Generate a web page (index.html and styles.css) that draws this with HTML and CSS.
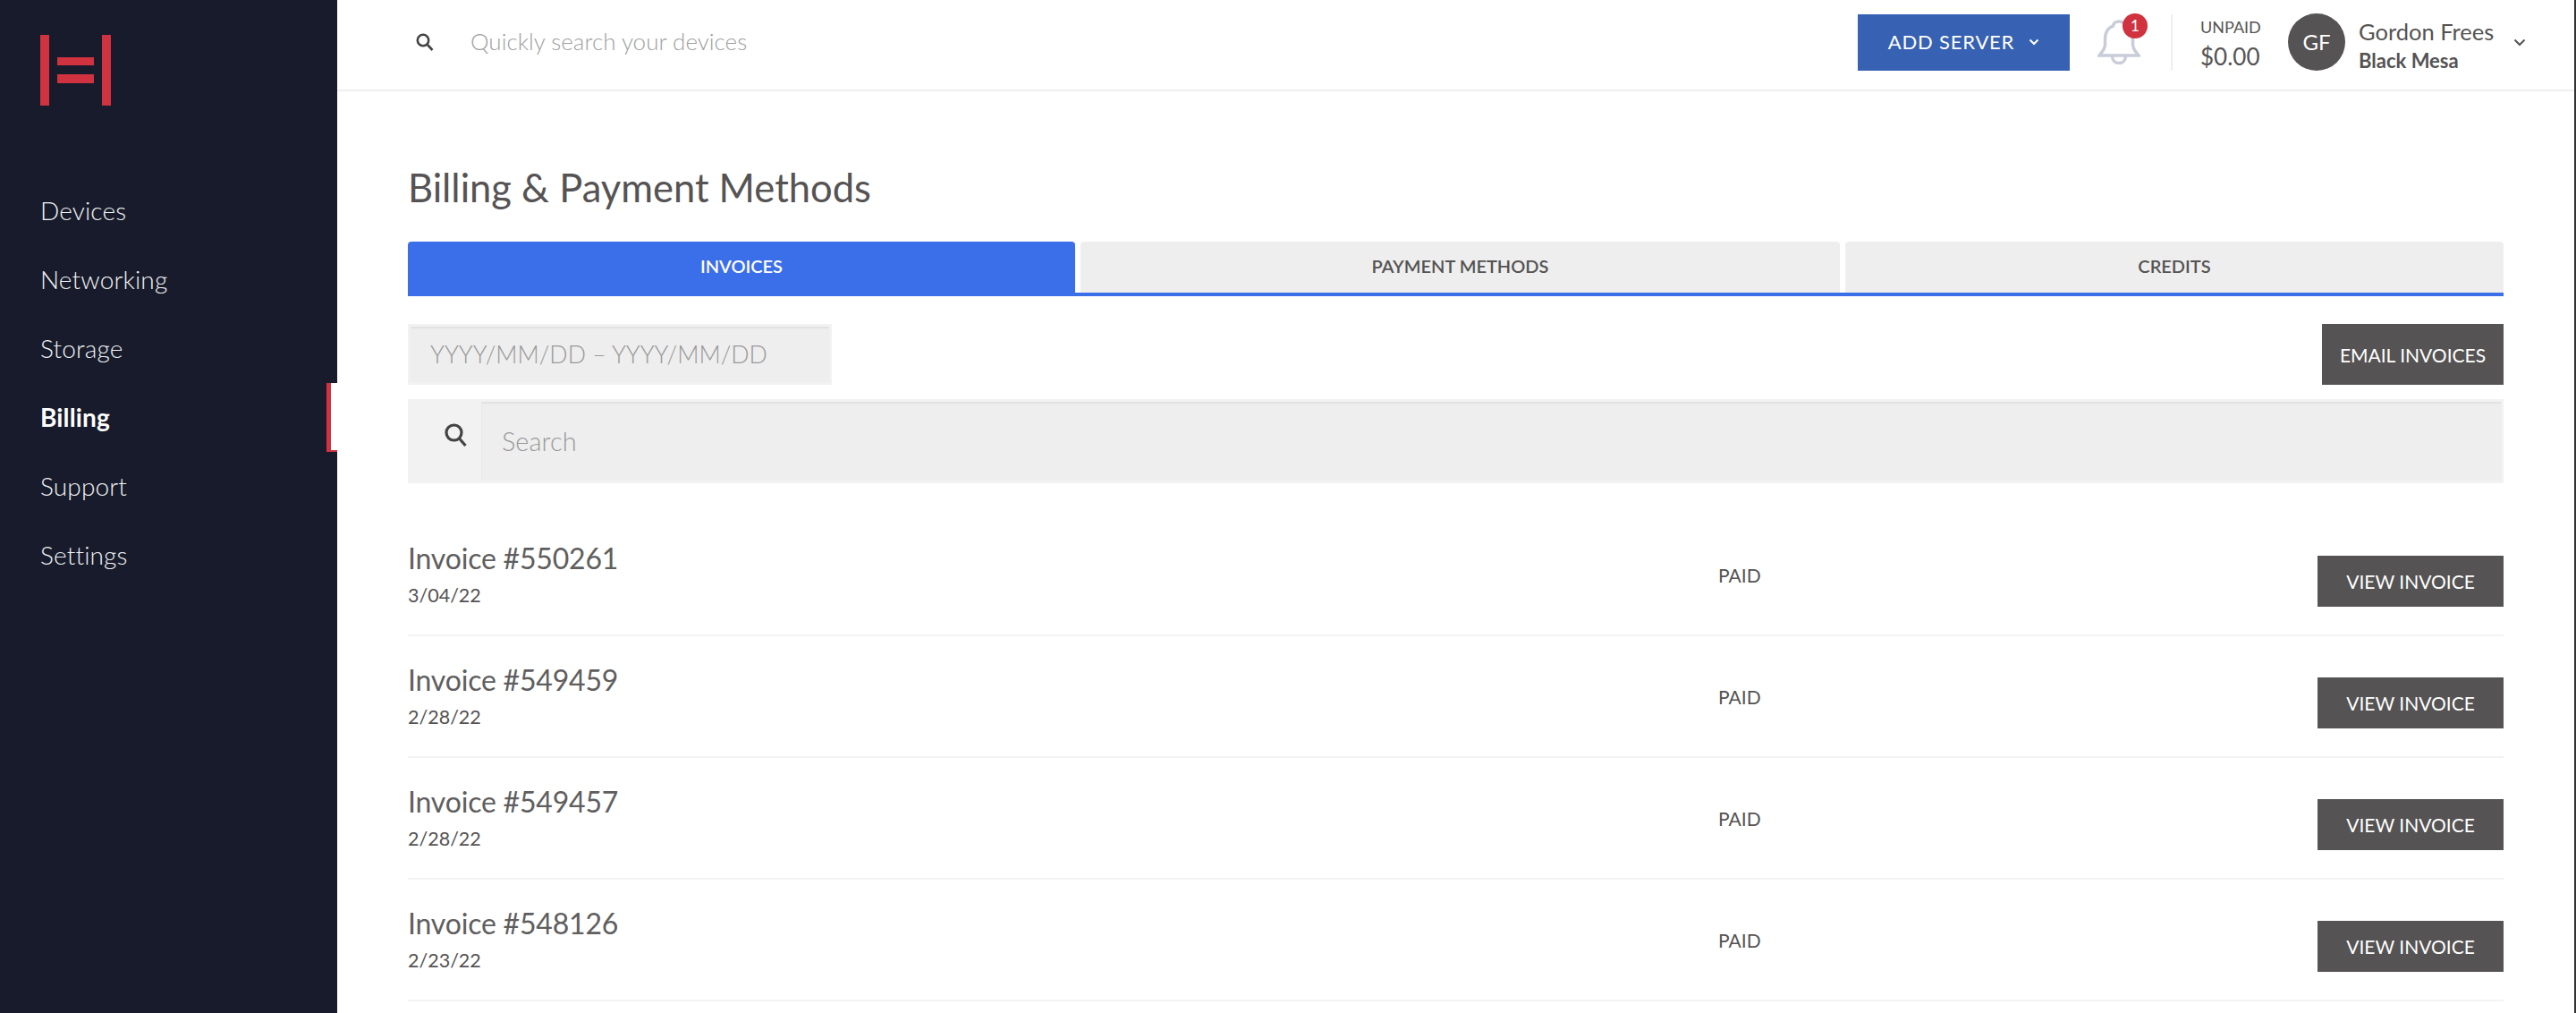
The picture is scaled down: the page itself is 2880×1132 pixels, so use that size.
FILE: index.html
```html
<!DOCTYPE html>
<html lang="en">
<head>
  <meta charset="UTF-8">
  <meta name="viewport" content="width=device-width, initial-scale=1.0">
  <title>Billing &amp; Payment Methods</title>
  <link rel="stylesheet" href="styles.css">
</head>
<body>
  <div class="app">
    <aside class="sidebar">
      <svg class="logo" width="79" height="79" viewBox="0 0 79 79">
        <rect x="0" y="0" width="10" height="79"/>
        <rect x="69" y="0" width="10" height="79"/>
        <rect x="19" y="25" width="41" height="9"/>
        <rect x="19" y="44" width="41" height="10"/>
      </svg>
      <nav class="nav">
        <a class="nav-item">Devices</a>
        <a class="nav-item">Networking</a>
        <a class="nav-item">Storage</a>
        <a class="nav-item active">Billing</a>
        <a class="nav-item">Support</a>
        <a class="nav-item">Settings</a>
      </nav>
    </aside>

    <div class="main">
      <header class="topbar">
        <svg class="top-search-icon" width="20" height="20" viewBox="0 0 20 20">
          <circle cx="8" cy="8" r="6.2"/>
          <path d="M12.5 12.5 L18.5 19"/>
        </svg>
        <span class="top-search-text">Quickly search your devices</span>
        <button class="add-server">ADD SERVER
          <svg width="12" height="8" viewBox="0 0 12 8"><path d="M1.5 1.5 L6 6 L10.5 1.5"/></svg>
        </button>
        <div class="bell">
          <svg width="48" height="50" viewBox="0 0 48 50">
            <path d="M24 2 C20 2 18 3.5 17.5 7 C11 9 8.5 14 8.5 22 L8.5 28 C8.5 33 5 36 2 40 L46 40 C43 36 39.5 33 39.5 28 L39.5 22 C39.5 14 37 9 30.5 7 C30 3.5 28 2 24 2 Z"/>
            <path d="M16.5 41 C17 51 31 51 31.5 41"/>
          </svg>
          <span class="badge">1</span>
        </div>
        <div class="unpaid">
          <span class="unpaid-label">UNPAID</span>
          <span class="unpaid-amount">$0.00</span>
        </div>
        <div class="avatar">GF</div>
        <div class="user">
          <span class="user-name">Gordon Frees</span>
          <span class="user-org">Black Mesa</span>
        </div>
        <svg class="user-chevron" width="14" height="9" viewBox="0 0 14 9"><path d="M1.5 1.5 L7 7 L12.5 1.5"/></svg>
      </header>

      <section class="content">
        <h1 class="page-title">Billing &amp; Payment Methods</h1>

        <div class="tabs">
          <div class="tab tab-active">INVOICES</div>
          <div class="tab tab-payment">PAYMENT METHODS</div>
          <div class="tab tab-credits">CREDITS</div>
        </div>

        <div class="filter-row">
          <div class="date-box">YYYY/MM/DD – YYYY/MM/DD</div>
          <button class="dark-btn email-btn">EMAIL INVOICES</button>
        </div>

        <div class="search-bar">
          <div class="search-addon">
            <svg width="26" height="26" viewBox="0 0 26 26">
              <circle cx="10.5" cy="10.5" r="8.5"/>
              <path d="M16.5 17 L23.5 25"/>
            </svg>
          </div>
          <div class="search-input">Search</div>
        </div>

        <div class="invoices">
          <div class="invoice">
            <div class="invoice-info">
              <div class="invoice-title">Invoice #550261</div>
              <div class="invoice-date">3/04/22</div>
            </div>
            <div class="invoice-status">PAID</div>
            <button class="dark-btn view-btn">VIEW INVOICE</button>
          </div>
          <div class="invoice">
            <div class="invoice-info">
              <div class="invoice-title">Invoice #549459</div>
              <div class="invoice-date">2/28/22</div>
            </div>
            <div class="invoice-status">PAID</div>
            <button class="dark-btn view-btn">VIEW INVOICE</button>
          </div>
          <div class="invoice">
            <div class="invoice-info">
              <div class="invoice-title">Invoice #549457</div>
              <div class="invoice-date">2/28/22</div>
            </div>
            <div class="invoice-status">PAID</div>
            <button class="dark-btn view-btn">VIEW INVOICE</button>
          </div>
          <div class="invoice">
            <div class="invoice-info">
              <div class="invoice-title">Invoice #548126</div>
              <div class="invoice-date">2/23/22</div>
            </div>
            <div class="invoice-status">PAID</div>
            <button class="dark-btn view-btn">VIEW INVOICE</button>
          </div>
        </div>
      </section>
    </div>
  </div>
</body>
</html>
```

FILE: styles.css
```css
html, body {
  margin: 0;
  height: 100%;
  overflow: hidden;
  background-color: #fff;
  font-family: Lato, "Open Sans", sans-serif;
  color: #555353;
}

button {
  font-family: inherit;
  border: none;
}

.app {
  display: flex;
  height: 1132px;
}

/* sidebar */
.sidebar {
  width: 377px;
  flex-shrink: 0;
  background-color: #171b2b;
}

.logo {
  display: block;
  margin: 39px 0 0 45px;
  fill: #d0323f;
}

.nav {
  display: flex;
  flex-direction: column;
  margin-top: 78px;
}

.nav-item {
  display: flex;
  align-items: center;
  height: 77px;
  padding-left: 45px;
  font-size: 28px;
  font-weight: 300;
  letter-spacing: 0.15px;
  color: #f2f3f5;
}

.nav-item.active {
  position: relative;
  font-weight: 700;
  color: #fff;
}

.nav-item.active::after {
  content: "";
  position: absolute;
  right: 0;
  top: 1px;
  width: 7px;
  height: 75px;
  background-color: #fff;
  border-left: 5px solid #d0323f;
  border-bottom: 2px solid #d0323f;
}

/* top bar */
.main {
  flex: 1;
  min-width: 0;
  border-right: 2px solid #333;
}

.topbar {
  display: flex;
  align-items: center;
  height: 102px;
  box-sizing: border-box;
  border-bottom: 2px solid #efefef;
  padding: 0 0 6px 88px;
}

.top-search-icon {
  fill: none;
  stroke: #444;
  stroke-width: 2.6;
}

.top-search-text {
  margin: -2px 0 0 41px;
  font-size: 26px;
  font-weight: 300;
  color: #a0a0a0;
}

.add-server {
  display: flex;
  align-items: center;
  justify-content: center;
  gap: 16px;
  width: 237px;
  height: 63px;
  padding-bottom: 2px;
  margin-left: auto;
  background-color: #3761b3;
  color: #fff;
  font-size: 22px;
  letter-spacing: 0.8px;
}

.add-server svg {
  fill: none;
  stroke: #fff;
  stroke-width: 2;
}

.bell {
  position: relative;
  width: 48px;
  height: 50px;
  margin: 0 34px 0 31px;
}

.bell svg {
  display: block;
  fill: none;
  stroke: #c9cdd9;
  stroke-width: 3.5;
}

.badge {
  position: absolute;
  top: -7px;
  right: -8px;
  width: 28px;
  height: 28px;
  border-radius: 50%;
  background-color: #d0323f;
  color: #fff;
  font-size: 17px;
  line-height: 28px;
  text-align: center;
}

.unpaid {
  display: flex;
  flex-direction: column;
  gap: 6px;
  width: 99px;
  height: 63px;
  box-sizing: border-box;
  padding-left: 31px;
  border-left: 2px solid #efefef;
}

.unpaid-label {
  font-size: 18px;
  line-height: 28px;
}

.unpaid-amount {
  font-size: 26px;
  line-height: 26px;
}

.avatar {
  width: 64px;
  height: 64px;
  margin-left: 32px;
  border-radius: 50%;
  background-color: #555353;
  color: #fff;
  font-size: 24px;
  line-height: 64px;
  text-align: center;
}

.user {
  display: flex;
  flex-direction: column;
  gap: 6px;
  width: 151px;
  margin: 7px 0 0 15px;
  white-space: nowrap;
}

.user-name {
  font-size: 25.5px;
  line-height: 28px;
}

.user-org {
  font-size: 22px;
  line-height: 26px;
  font-weight: 700;
}

.user-chevron {
  margin: 0 54px 0 22px;
  fill: none;
  stroke: #555353;
  stroke-width: 2;
}

/* page content */
.content {
  padding: 0 79px;
}

.page-title {
  margin: 80px 0 0 0;
  font-size: 43.5px;
  line-height: 54px;
  font-weight: 400;
}

.tabs {
  display: flex;
  gap: 6px;
  margin-top: 34px;
  border-bottom: 4px solid #3b6ee9;
}

.tab {
  display: flex;
  align-items: center;
  justify-content: center;
  height: 57px;
  box-sizing: border-box;
  padding-bottom: 3px;
  border-radius: 4px 4px 0 0;
  background-color: #eeeeee;
  font-size: 20px;
  font-weight: 600;
}

.tab-active {
  width: 746px;
  height: 61px;
  margin-bottom: -4px;
  padding-bottom: 7px;
  background-color: #3b6ee9;
  color: #fff;
}

.tab-payment {
  width: 849px;
}

.tab-credits {
  flex: 1;
}

.filter-row {
  display: flex;
  justify-content: space-between;
  margin-top: 31px;
}

.date-box {
  display: flex;
  align-items: center;
  width: 474px;
  height: 68px;
  box-sizing: border-box;
  padding-left: 22px;
  border: 3px solid #f2f2f2;
  background-color: #eeeeee;
  box-shadow: inset 0 2px 1px #e2e2e2;
  font-size: 26.7px;
  font-weight: 300;
  color: #999;
}

.dark-btn {
  background-color: #555353;
  color: #fff;
  font-size: 21px;
}

.email-btn {
  width: 203px;
  height: 68px;
}

.search-bar {
  display: flex;
  height: 94px;
  box-sizing: border-box;
  margin-top: 16px;
  padding: 3px 3px 3px 0;
  background-color: #f2f2f2;
}

.search-addon {
  width: 82px;
  padding-left: 41px;
  box-sizing: border-box;
  padding-top: 24px;
}

.search-addon svg {
  display: block;
  fill: none;
  stroke: #444;
  stroke-width: 3.2;
}

.search-input {
  flex: 1;
  display: flex;
  align-items: center;
  padding: 0 0 2px 23px;
  background-color: #eeeeee;
  box-shadow: inset 0 2px 1px #e2e2e2, inset 1px 0 0 #e9e9e9;
  font-size: 29px;
  font-weight: 300;
  color: #999;
}

/* invoice list */
.invoices {
  margin-top: 35px;
}

.invoice {
  display: flex;
  align-items: center;
  height: 136px;
  box-sizing: border-box;
  border-bottom: 2px solid #f3f3f3;
}

.invoice-info {
  width: 1465px;
}

.invoice-title {
  font-size: 32px;
  line-height: 40px;
  font-weight: 400;
  letter-spacing: -0.2px;
  color: #605e5e;
}

.invoice-date {
  margin-top: 6px;
  font-size: 21.5px;
  line-height: 30px;
  font-weight: 400;
}

.invoice-status {
  margin-top: 0;
  font-size: 21px;
}

.view-btn {
  width: 208px;
  height: 57px;
  margin-left: auto;
  margin-top: 14px;
}
```
